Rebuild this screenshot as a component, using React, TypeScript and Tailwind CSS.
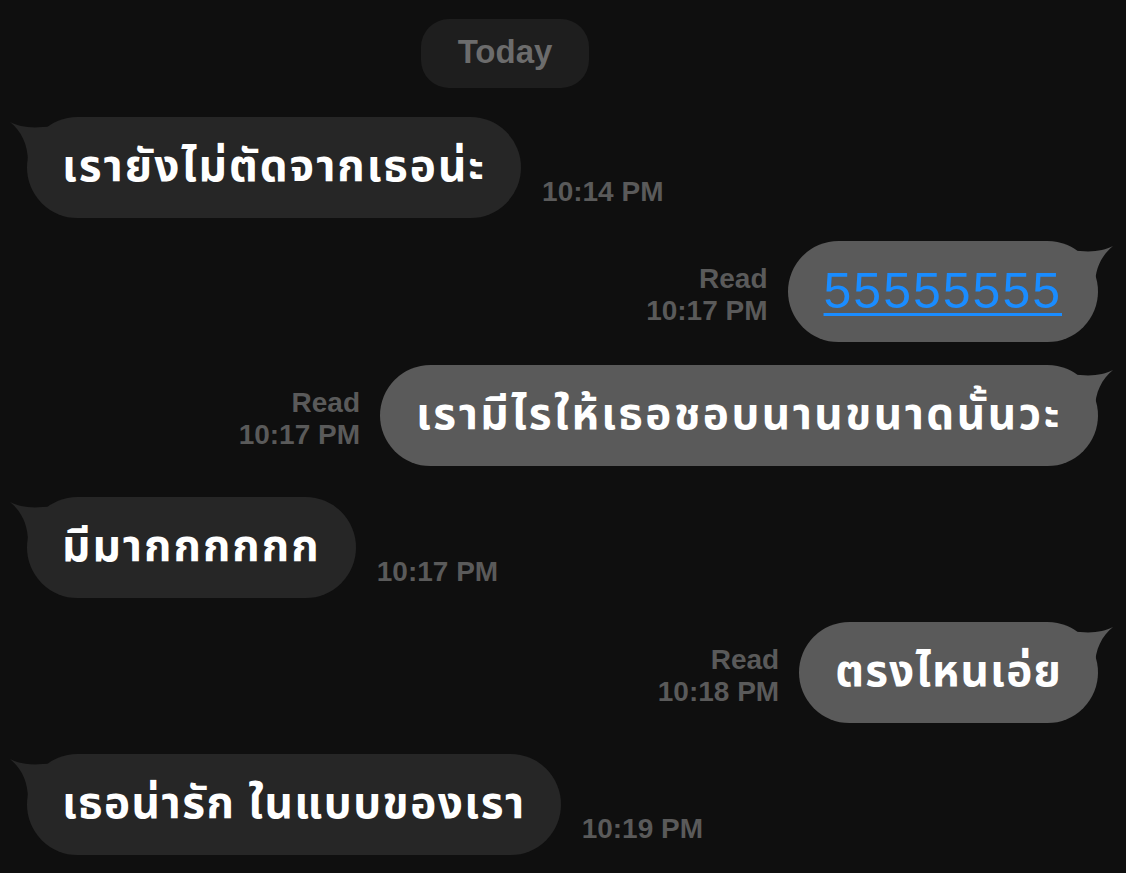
import React from "react";

const thai = { fontFamily: '"Noto Sans Thai", "Noto Sans", "DejaVu Sans", sans-serif' };

const Tail = ({ color, side }: { color: string; side: "left" | "right" }) => (
  <svg
    width="44"
    height="44"
    viewBox="0 0 44 44"
    className={
      side === "left"
        ? "absolute -left-[17px] top-[3px]"
        : "absolute -right-[15px] top-[3px] -scale-x-100"
    }
  >
    <path d="M0 2 C10 7 22 9 42 6 L42 42 L18 42 C18 24 11 11 0 2 Z" fill={color} />
  </svg>
);

const Incoming = ({
  text,
  time,
  gapTop,
  tracking = "tracking-[2px]",
}: {
  text: string;
  time: string;
  gapTop: string;
  tracking?: string;
}) => (
  <div className={`flex items-end pl-[27px] ${gapTop}`}>
    <div className="relative flex h-[101px] items-center rounded-full bg-[#262626] px-[35px]">
      <Tail color="#262626" side="left" />
      <span className={`relative text-[44px] font-bold text-white ${tracking}`} style={thai}>
        {text}
      </span>
    </div>
    <span className="mb-[10px] ml-[21px] text-[28px] font-semibold leading-[32px] text-[#5a5a5a]">
      {time}
    </span>
  </div>
);

const Outgoing = ({
  children,
  time,
  gapTop,
}: {
  children: React.ReactNode;
  time: string;
  gapTop: string;
}) => (
  <div className={`flex items-start justify-end pr-[28px] ${gapTop}`}>
    <div className="mr-[20px] mt-[22px] flex flex-col items-end text-[28px] font-semibold leading-[32px] text-[#5a5a5a]">
      <span>Read</span>
      <span>{time}</span>
    </div>
    <div className="relative flex h-[101px] items-center rounded-full bg-[#5a5a5a] px-[36px]">
      <Tail color="#5a5a5a" side="right" />
      {children}
    </div>
  </div>
);

export default function App() {
  return (
    <div
      className="h-[873px] w-[1126px] overflow-hidden bg-[#0f0f0f] pt-[19px]"
      style={{ fontFamily: '"Liberation Sans", Arial, sans-serif' }}
    >
      <div className="pl-[421px]">
        <div className="flex h-[69px] w-[168px] items-center justify-center rounded-[28px] bg-[#1e1e1e] pb-[3px] text-[33px] font-semibold text-[#6c6c6c]">
          Today
        </div>
      </div>

      <Incoming text="เรายังไม่ตัดจากเธอน่ะ" time="10:14 PM" gapTop="mt-[29px]" />

      <Outgoing time="10:17 PM" gapTop="mt-[23px]">
        <span className="relative text-[50px] tracking-[2px] text-[#1a8cff] underline decoration-[3px] underline-offset-[5px]">
          55555555
        </span>
      </Outgoing>

      <Outgoing time="10:17 PM" gapTop="mt-[23px]">
        <span className="relative text-[44px] font-bold tracking-[2.5px] text-white" style={thai}>
          เรามีไรให้เธอชอบนานขนาดนั้นวะ
        </span>
      </Outgoing>

      <Incoming text="มีมากกกกกก" time="10:17 PM" gapTop="mt-[31px]" />

      <Outgoing time="10:18 PM" gapTop="mt-[24px]">
        <span className="relative text-[44px] font-bold tracking-[1.2px] text-white" style={thai}>
          ตรงไหนเอ่ย
        </span>
      </Outgoing>

      <Incoming
        text="เธอน่ารัก ในแบบของเรา"
        time="10:19 PM"
        gapTop="mt-[31px]"
        tracking="tracking-[1.5px]"
      />
    </div>
  );
}
